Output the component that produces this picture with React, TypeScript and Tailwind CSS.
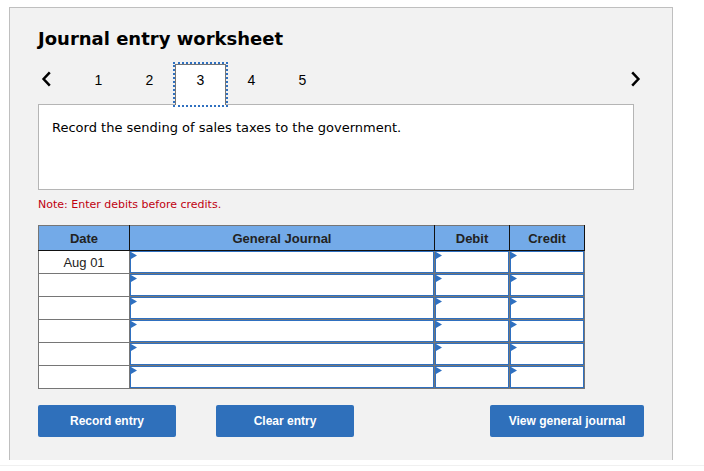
import { useState } from 'react';

const steps = [1, 2, 3, 4, 5];

const prompts: Record<number, string> = {
  3: 'Record the sending of sales taxes to the government.',
};

const rows = ['Aug 01', '', '', '', '', ''];
const fields = ['General Journal', 'Debit', 'Credit'];

function Chevron({ direction }: { direction: 'left' | 'right' }) {
  return (
    <svg width="10" height="16" viewBox="0 0 10 16" fill="none" stroke="#000" strokeWidth="2.5" aria-hidden="true">
      <path d={direction === 'left' ? 'M8.8 1.4L2.6 8l6.2 6.6' : 'M1.2 1.4L7.4 8l-6.2 6.6'} />
    </svg>
  );
}

function EntryCell({ label }: { label: string }) {
  return (
    <td className="border border-[#767676] bg-white p-0">
      <div className="relative">
        <input
          aria-label={label}
          className="block h-[22px] w-full border border-[#2f70c0] bg-white px-2 text-[13px] outline-none"
        />
        {/* Cell marker */}
        <svg className="pointer-events-none absolute left-px top-px" width="6" height="7" viewBox="0 0 6 7" aria-hidden="true">
          <path d="M0 0L6 3.5L0 7Z" fill="#2f70c0" />
        </svg>
      </div>
    </td>
  );
}

export default function App() {
  const [step, setStep] = useState(3);

  const buttonClass =
    "h-8 rounded-xs bg-[#2f70bb] text-[12px] font-bold text-white hover:bg-[#285f9f]";

  return (
    <div className="bg-white pt-[7px] font-['Liberation_Sans',Arial,sans-serif] text-black">
      <main className="ml-[9px] mr-[31px] border border-b-0 border-[#bfbfbf] bg-[#f2f2f2] px-7 pb-[23px] pt-[19px]">
        <h1 className="font-['Verdana','DejaVu_Sans',sans-serif] text-[18px] font-bold leading-6">Journal entry worksheet</h1>

        {/* Step navigation */}
        <nav className="mt-[13px] flex h-[41px]">
          <button
            aria-label="Previous entry"
            className="flex w-[35px] items-start pl-[3px] pt-[7px]"
            onClick={() => setStep(Math.max(1, step - 1))}
          >
            <Chevron direction="left" />
          </button>
          {steps.map((n) => (
            <button
              key={n}
              onClick={() => setStep(n)}
              className={`relative w-[51px] border border-b-0 pb-2.5 text-[14px] ${
                n === step
                  ? 'border-[#767676] bg-white outline-2 outline-dotted outline-[#2f70c0]'
                  : 'border-transparent'
              }`}
            >
              {n}
            </button>
          ))}
          <button
            aria-label="Next entry"
            className="ml-auto flex items-start pr-[3px] pt-[7px]"
            onClick={() => setStep(Math.min(steps.length, step + 1))}
          >
            <Chevron direction="right" />
          </button>
        </nav>

        <section className="-mt-px mr-[10px] min-h-[86px] border border-[#b5b5b5] bg-white p-[13px] font-['Verdana','DejaVu_Sans',sans-serif] text-[13px] leading-5">
          {prompts[step]}
        </section>

        <p className="mt-[7px] font-['Verdana','DejaVu_Sans',sans-serif] text-[11px] leading-4 text-[#c00010]">
          Note: Enter debits before credits.
        </p>

        <table className="mt-3 w-[547px] table-fixed border-collapse border border-[#767676] text-[13px]">
          <colgroup>
            <col className="w-[91px]" />
            <col />
            <col className="w-[75px]" />
            <col className="w-[75px]" />
          </colgroup>
          <thead>
            <tr className="h-[25px] bg-[#73aae8] text-[#222]">
              {['Date', ...fields].map((heading) => (
                <th key={heading} className="border-b border-r border-[#111] p-0 pt-0.5 font-bold">
                  {heading}
                </th>
              ))}
            </tr>
          </thead>
          <tbody>
            {rows.map((date, i) => (
              <tr key={i} className="h-[23px]">
                <td className="border border-[#767676] bg-white p-0 pt-0.5 text-center text-[#222]">{date}</td>
                {fields.map((field) => (
                  <EntryCell key={field} label={`${field} line ${i + 1}`} />
                ))}
              </tr>
            ))}
          </tbody>
        </table>

        {/* Actions */}
        <div className="mt-4 flex gap-10">
          <button className={`${buttonClass} w-[138px]`}>Record entry</button>
          <button className={`${buttonClass} w-[138px]`}>Clear entry</button>
          <button className={`${buttonClass} ml-auto w-[154px]`}>View general journal</button>
        </div>
      </main>
      <hr className="mt-[5px] border-[#f0f0f0]" />
    </div>
  );
}
